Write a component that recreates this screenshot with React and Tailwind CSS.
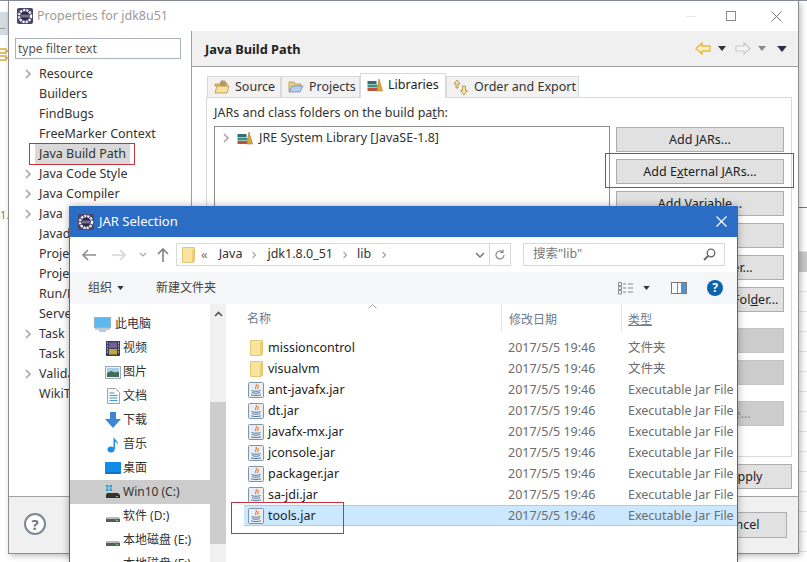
const FONT = { fontFamily: '"Noto Sans", "Noto Sans CJK SC", sans-serif' }

// rows from "Java" down are mostly under the JAR Selection dialog, so they get clipped
const TREE = [
  ['Resource', true],
  ['Builders'],
  ['FindBugs'],
  ['FreeMarker Context'],
  ['Java Build Path', false, true],
  ['Java Code Style', true],
  ['Java Compiler', true],
  ['Java', true, false, true],
  ['Javadoc Location', false, false, true],
  ['Project Facets', false, false, true],
  ['Project References', false, false, true],
  ['Run/Debug Settings', false, false, true],
  ['Server', false, false, true],
  ['Task', true, false, true],
  ['Task', false, false, true],
  ['Validation', true, false, true],
  ['WikiText', false, false, true],
]

const FILES = ['ant-javafx.jar', 'dt.jar', 'javafx-mx.jar', 'jconsole.jar', 'packager.jar', 'sa-jdi.jar']

const STRIP = [20, 20, 20, 20, 20, 20, 20, 20, 20, 20, 20, 20, 20, 20, 20, 20, 20, 20]

function EclipseIcon({ size = 16 }) {
  return (
    <svg width={size} height={size} viewBox="0 0 16 16" className="shrink-0">
      <rect width="16" height="16" rx="2" fill="#4a4468" />
      <circle cx="8" cy="8" r="6" fill="none" stroke="#f4f4f8" strokeWidth="2.4" strokeDasharray="2.2 1" />
      <circle cx="8" cy="8" r="4.3" fill="#2d2a45" />
      <path d="M4 7.2h8M4 8.8h8" stroke="#b9a7d8" strokeWidth="0.8" />
    </svg>
  )
}

function Chevron({ className = '' }) {
  return (
    <svg width="8" height="10" viewBox="0 0 8 10" className={className}>
      <path d="M2 1l4 4-4 4" fill="none" stroke="#a6a6a6" strokeWidth="1.6" />
    </svg>
  )
}

function Caret({ color = '#333', w = 8, h = 5 }) {
  return (
    <svg width={w} height={h} viewBox="0 0 8 5" className="shrink-0">
      <path d="M0 0h8L4 5z" fill={color} />
    </svg>
  )
}

function LibIcon() {
  return (
    <svg width="16" height="14" viewBox="0 0 16 14" className="shrink-0">
      <rect x="0.5" y="10" width="10" height="3" fill="#b5533c" />
      <rect x="0.5" y="6.5" width="10" height="3" fill="#3f8d7c" />
      <rect x="0.5" y="3" width="9" height="3" fill="#2f6f78" />
      <path d="M10 13L12 1l3.500 12z" fill="#e0a53b" stroke="#a9772a" strokeWidth="0.6" />
    </svg>
  )
}

function SourceIcon() {
  return (
    <svg width="16" height="14" viewBox="0 0 16 14" className="shrink-0">
      <path d="M1 4h4l1-1h7v3H1z" fill="#e8c572" stroke="#b08a3c" strokeWidth="0.7" />
      <path d="M3 6h12l-2 7H1z" fill="#f7dfa0" stroke="#b08a3c" strokeWidth="0.7" />
      <path d="M7 1h4v4H7zM9 1v4M7 3h4" fill="#f3d48c" stroke="#8a5a2c" strokeWidth="0.6" />
    </svg>
  )
}

function ProjectsIcon() {
  return (
    <svg width="16" height="14" viewBox="0 0 16 14" className="shrink-0">
      <path d="M1 12V2h5l1 2h6v2" fill="#eccd82" stroke="#a88a45" strokeWidth="0.7" />
      <path d="M1 12l3-6h11l-3 6z" fill="#b9cdeb" stroke="#6784b4" strokeWidth="0.7" />
    </svg>
  )
}

function OrderIcon() {
  return (
    <svg width="16" height="17" viewBox="0 0 16 17" className="shrink-0">
      <path d="M4 1l3 4H5v4H3V5H1zM11 16l3.500-4.500H12.500V7h-3v4.500H7.500z" fill="#f7e3a6" stroke="#a98a3a" strokeWidth="0.8" />
    </svg>
  )
}

function JarIcon() {
  return (
    <svg width="16" height="16" viewBox="0 0 16 16" className="shrink-0">
      <rect x="0.5" y="0.5" width="15" height="15" rx="1" fill="#e9eef4" stroke="#7f94aa" />
      <path d="M8 2c2 2-2 3 0 5M10 3c1 1.500-1 2.500 0 4" fill="none" stroke="#e07b2c" strokeWidth="1.100" />
      <path d="M3.500 8.500c2 1 7 1 9 0M4 10.500c2 1 6 1 8 0M3 12.800c2.500 1 7.500 1 10 0" fill="none" stroke="#56779e" strokeWidth="1" />
    </svg>
  )
}

function FolderIcon({ w = 16, h = 16 }) {
  return (
    <svg width={w} height={h} viewBox="0 0 13 16" className="shrink-0">
      <path d="M0.500 0.500h12v13.500l-1.500 1.500H0.500z" fill="#fae39a" stroke="#e2c775" />
      <path d="M11 15.500V3l1.500-1" fill="none" stroke="#d9b95f" />
    </svg>
  )
}

function DriveIcon({ win }) {
  return (
    <svg width="16" height="16" viewBox="0 0 16 16" className="shrink-0">
      {win && <path d="M1 1h2.500v2.500H1zM4.500 1H7v2.500H4.500zM1 4.500h2.500V7H1zM4.500 4.500H7V7H4.500z" fill="#29a3dc" />}
      <path d="M2 9h11l2 2v3H1v-3z" fill={win ? '#333' : '#5c5c5c'} />
      {!win && <path d="M2 9h11l1.500 2H1z" fill="#b9b9b9" />}
      <rect x="11" y="12" width="2" height="1" fill="#6fd06f" />
    </svg>
  )
}

function NavIcon({ kind }) {
  if (kind === 'pc') {
    return (
      <svg width="17" height="15" viewBox="0 0 17 15" className="shrink-0">
        <rect x="0.500" y="0.500" width="16" height="10" fill="#5cb8ee" stroke="#8fb6cc" />
        <path d="M1 12h15M5 14h7" stroke="#7f98a8" strokeWidth="1.200" />
      </svg>
    )
  }
  if (kind === 'video') {
    return (
      <svg width="14" height="15" viewBox="0 0 14 15" className="shrink-0">
        <rect width="14" height="15" fill="#33415a" />
        <rect x="3" y="1.500" width="8" height="5.500" fill="#7a5d9a" />
        <rect x="3" y="8" width="8" height="5.500" fill="#c9a43a" />
        <path d="M1 2h1M1 5h1M1 8h1M1 11h1M12 2h1M12 5h1M12 8h1M12 11h1" stroke="#e8edf2" />
      </svg>
    )
  }
  if (kind === 'pic') {
    return (
      <svg width="16" height="13" viewBox="0 0 16 13" className="shrink-0">
        <rect x="0.500" y="0.500" width="15" height="12" fill="#f0f3f5" stroke="#9aa9b5" />
        <rect x="2" y="2" width="12" height="5" fill="#a6cfe6" />
        <path d="M2 7l4-2 4 1.500 4-1V11H2z" fill="#3f6b58" />
      </svg>
    )
  }
  if (kind === 'doc') {
    return (
      <svg width="13" height="16" viewBox="0 0 13 16" className="shrink-0">
        <path d="M0.500 0.500h8l4 4v11h-12z" fill="#f7f9fb" stroke="#97a7b5" />
        <path d="M2.500 5h5M2.500 7.500h8M2.500 10h8M2.500 12.500h8" stroke="#4a94d0" />
      </svg>
    )
  }
  if (kind === 'down') {
    return (
      <svg width="16" height="16" viewBox="0 0 16 16" className="shrink-0">
        <path d="M5 0h6v7h5l-8 9-8-9h5z" fill="#3b87d6" />
      </svg>
    )
  }
  if (kind === 'music') {
    return (
      <svg width="12" height="17" viewBox="0 0 12 17" className="shrink-0">
        <ellipse cx="4" cy="13.500" rx="3.500" ry="3" fill="#1b8fe3" />
        <path d="M6.500 13V0.500c0.500 3 5 4 4.500 8-1-2-2.500-3-3-3V13z" fill="#1b8fe3" />
      </svg>
    )
  }
  return (
    <svg width="16" height="12" viewBox="0 0 16 12" className="shrink-0">
      <rect width="16" height="12" rx="0.500" fill="#118ae8" />
      <path d="M1 11h14" stroke="#0a5ea8" />
    </svg>
  )
}

function EclipseButton({ children, disabled }) {
  return (
    <div
      className={`h-[25px] pt-px flex items-center justify-center border whitespace-nowrap ${
        disabled ? 'bg-[#cccccc] border-[#c4c4c4] text-[#8a8a8a]' : 'bg-[#e1e1e1] border-[#adadad] text-[#222]'
      }`}
    >
      <span>{children}</span>
    </div>
  )
}

function Tab({ icon, label, active, width }) {
  return (
    <div
      className={`flex items-center gap-[5px] pl-[6px] border border-[#d9d9d9] whitespace-nowrap ${
        active ? 'h-[25px] bg-white border-b-0 text-[#222] relative pb-[2px]' : 'h-[22px] bg-[#f2f2f2] text-[#333]'
      }`}
      style={{ width }}
    >
      {icon}
      <span>{label}</span>
    </div>
  )
}

function Properties() {
  return (
    <div className="absolute left-[8px] top-[1px] w-[791px] h-[553px] bg-white border-l border-b border-r border-[#8d8d8d] flex flex-col shadow-[2px_2px_6px_rgba(0,0,0,0.25)] overflow-hidden">
      <div className="h-[30px] shrink-0 flex items-center pl-[8px] text-[#9b9b9b] text-[12.500px]">
        <EclipseIcon />
        <span className="ml-[4px]">Properties for jdk8u51</span>
        <div className="ml-auto flex items-center">
          <div className="w-[10px] h-px bg-[#e8e8e8] mr-[30px]" />
          <div className="w-[10px] h-[10px] border border-[#8a8a8a] mr-[35px]" />
          <svg width="11" height="11" viewBox="0 0 11 11" className="mr-[16px]">
            <path d="M0.500 0.500l10 10M10.500 0.500l-10 10" stroke="#777" />
          </svg>
        </div>
      </div>

      <div className="flex h-[465px] shrink-0">
        <div className="w-[183px] shrink-0 border-r border-[#a0a0a0] pt-[7px]">
          <div className="ml-[6px] w-[166px] h-[21px] border border-[#a9b2bd] flex items-center pl-[2px] pt-px text-[#555] text-[12px]">
            type filter text
          </div>
          <div className="mt-[5px]">
            {TREE.map(([label, arrow, selected, clipped], i) => (
              <div key={i} className="h-[20px] flex items-center relative pl-[30px] text-[#333]">
                {arrow && <Chevron className="absolute left-[15px] top-[5px]" />}
                <span
                  className={`whitespace-nowrap ${selected ? 'bg-[#d9d9d9] h-[20px] leading-[20px] px-[4px] -ml-[4px]' : ''} ${
                    clipped ? 'w-[30px] overflow-hidden' : ''
                  }`}
                >
                  {label}
                </span>
              </div>
            ))}
          </div>
        </div>

        <div className="flex-1 flex flex-col min-w-0">
          <div className="h-[36px] shrink-0 bg-[#f0f0f0] border-b border-[#a0a0a0] flex items-center pl-[13px] pr-[11px]">
            <span className="font-bold text-[12.800px] text-[#222] pt-[3px]">Java Build Path</span>
            <div className="ml-auto flex items-center">
              <svg width="16" height="13" viewBox="0 0 16 13">
                <path d="M7 1L1 6.500 7 12V9h8V4H7z" fill="#fdf0c4" stroke="#e7b63f" strokeWidth="1.300" />
              </svg>
              <div className="ml-[7px]"><Caret color="#333" /></div>
              <svg width="16" height="13" viewBox="0 0 16 13" className="ml-[9px]">
                <path d="M9 1l6 5.500L9 12V9H1V4h8z" fill="#f4f4f4" stroke="#c9c9c9" strokeWidth="1.200" />
              </svg>
              <div className="ml-[7px]"><Caret color="#8a8a8a" /></div>
              <div className="ml-[11px]"><Caret color="#2f2a45" w={10} h={6} /></div>
            </div>
          </div>

          <div className="pl-[14px] pr-[6px] pt-[6px] flex-1 flex flex-col">
            <div className="flex items-end h-[25px] pl-[1px] text-[12.500px] relative z-10 -mb-px">
              <Tab icon={<SourceIcon />} label="Source" width={74} />
              <Tab icon={<ProjectsIcon />} label="Projects" width={79} />
              <Tab icon={<LibIcon />} label="Libraries" active width={86} />
              <Tab icon={<OrderIcon />} label="Order and Export" width={133} />
            </div>
            <div className="h-[360px] shrink-0 border border-[#d9d9d9] pl-[7px] pr-[7px] text-[12.500px]">
              <div className="h-[28px] flex items-center pt-[2px] text-[#333]">
                <span>JARs and class folders on the build pa<u>t</u>h:</span>
              </div>
              <div className="flex gap-[6px]">
                <div className="w-[396px] h-[322px] border border-[#8f8f8f] pl-[7px] pt-[3px]">
                  <div className="flex items-center h-[16px] text-[#333]">
                    <Chevron />
                    <span className="ml-[7px]"><LibIcon /></span>
                    <span className="ml-[6px] whitespace-nowrap">JRE System Library [JavaSE-1.8]</span>
                  </div>
                </div>
                <div className="w-[168px] pt-px flex flex-col gap-[7px]">
                  <EclipseButton>Add <u>J</u>ARs...</EclipseButton>
                  <EclipseButton>Add E<u>x</u>ternal JARs...</EclipseButton>
                  <EclipseButton>Add <u>V</u>ariable...</EclipseButton>
                  <EclipseButton>Add Li<u>b</u>rary...</EclipseButton>
                  <EclipseButton>Add <u>C</u>lass Folder...</EclipseButton>
                  <EclipseButton>Add External Class Fol<u>d</u>er...</EclipseButton>
                  <div className="mt-[9px]"><EclipseButton disabled>Edit...</EclipseButton></div>
                  <EclipseButton disabled>Remove</EclipseButton>
                  <div className="mt-[9px]"><EclipseButton disabled>Migrate JAR File...</EclipseButton></div>
                </div>
              </div>
            </div>
            <div className="mt-[7px] self-end w-[92px] h-[25px] pt-px border border-[#adadad] bg-[#e1e1e1] flex items-center justify-center text-[12.500px] text-[#222]">
              Apply
            </div>
          </div>
        </div>
      </div>

      <div className="flex-1 border-t border-[#a0a0a0] bg-[#f0f0f0] flex items-center pl-[15px] pr-[11px]">
        <div className="w-[22px] h-[22px] rounded-full border-2 border-[#7d8793] bg-white flex items-center justify-center font-bold text-[15px] text-[#6e7885] -mt-[2px]">
          ?
        </div>
        <div className="ml-auto w-[94px] h-[26px] pt-px border border-[#adadad] bg-[#e1e1e1] flex items-center justify-center text-[12.500px] text-[#222]">
          Cancel
        </div>
      </div>
    </div>
  )
}

function NavRow({ icon, label, indent = 'pl-[33px]', gap = 'ml-0', selected }) {
  return (
    <div className={`h-[24px] flex items-center ${indent} ${selected ? 'bg-[#cccccc]' : ''}`}>
      <div className="w-[20px] flex justify-center shrink-0">{icon}</div>
      <span className={`${gap} whitespace-nowrap`}>{label}</span>
    </div>
  )
}

function FileRow({ icon, name, type, selected }) {
  return (
    <div className={`h-[21px] grid grid-cols-[257px_120px_1fr] items-center whitespace-nowrap box-border ${selected ? 'bg-[#cce8ff] border-y border-[#99d1ff]' : ''}`}>
      <div className="flex items-center pl-[4px] text-[#222]">
        <div className="w-[16px] flex justify-center">{icon}</div>
        <span className="ml-[4px] pt-px">{name}</span>
      </div>
      <div className="pl-[7px] pt-px text-[#6d6d6d]">2017/5/5 19:46</div>
      <div className="pl-[7px] pt-px text-[#6d6d6d]">{type}</div>
    </div>
  )
}

function JarDialog() {
  return (
    <div className="absolute left-[69px] top-[206px] w-[669px] h-[356px] bg-white border-x border-[#2b6cc4] flex flex-col overflow-hidden shadow-[0_0_8px_rgba(0,0,0,0.3)] text-[12.500px]">
      <div className="h-[31px] shrink-0 bg-[#2b6cc4] flex items-center pl-[8px] text-white text-[13px]">
        <EclipseIcon />
        <span className="ml-[5px]">JAR Selection</span>
        <svg width="11" height="11" viewBox="0 0 11 11" className="ml-auto mr-[10px]">
          <path d="M0.500 0.500l10 10M10.500 0.500l-10 10" stroke="#fff" strokeWidth="1.200" />
        </svg>
      </div>

      <div className="h-[35px] shrink-0 flex items-center">
        <svg width="14" height="12" viewBox="0 0 14 12" className="ml-[12px]">
          <path d="M6 1L1 6l5 5M1 6h13" fill="none" stroke="#8f8f8f" strokeWidth="1.600" />
        </svg>
        <svg width="14" height="12" viewBox="0 0 14 12" className="ml-[16px]">
          <path d="M8 1l5 5-5 5M13 6H0" fill="none" stroke="#d6d6d6" strokeWidth="1.600" />
        </svg>
        <svg width="8" height="5" viewBox="0 0 8 5" className="ml-[13px]">
          <path d="M1 1l3 3 3-3" fill="none" stroke="#a8a8a8" strokeWidth="1.200" />
        </svg>
        <svg width="12" height="14" viewBox="0 0 12 14" className="ml-[10px]">
          <path d="M1 6l5-5 5 5M6 1v13" fill="none" stroke="#808080" strokeWidth="1.600" />
        </svg>
        <div className="ml-[7px] w-[335px] h-[23px] border border-[#d9d9d9] flex items-center pl-[5px] text-[#333] shrink-0">
          <FolderIcon w={13} h={16} />
          <span className="ml-[6px] text-[#777] text-[13px]">«</span>
          <span className="ml-[11px]">Java</span>
          <Chevron className="ml-[8px] scale-75" />
          <span className="ml-[9px]">jdk1.8.0_51</span>
          <Chevron className="ml-[8px] scale-75" />
          <span className="ml-[8px]">lib</span>
          <Chevron className="ml-[9px] scale-75" />
          <svg width="10" height="6" viewBox="0 0 10 6" className="ml-auto mr-[4px]">
            <path d="M1 1l4 4 4-4" fill="none" stroke="#707070" strokeWidth="1.400" />
          </svg>
          <div className="w-px h-full bg-[#d9d9d9]" />
          <svg width="12" height="12" viewBox="0 0 12 12" className="mx-[4px]">
            <path d="M10 6a4 4 0 1 1-1.500-3.200M9 0.500v3H6" fill="none" stroke="#8a8a8a" strokeWidth="1.200" />
          </svg>
        </div>
        <div className="ml-[12px] w-[202px] h-[23px] border border-[#d9d9d9] flex items-center pl-[9px] pr-[8px] text-[#777] shrink-0">
          <span>搜索"lib"</span>
          <svg width="13" height="13" viewBox="0 0 13 13" className="ml-auto">
            <circle cx="8" cy="5" r="3.800" fill="none" stroke="#666" strokeWidth="1.300" />
            <path d="M5 8l-4 4" stroke="#666" strokeWidth="1.800" />
          </svg>
        </div>
      </div>

      <div className="h-[32px] shrink-0 bg-[#f5f6f7] flex items-center pl-[18px] text-[#444] text-[12px]">
        <span>组织</span>
        <div className="ml-[5px]"><Caret color="#333" w={7} h={4} /></div>
        <span className="ml-[32px]">新建文件夹</span>
        <div className="ml-auto flex items-center pr-[14px]">
          <svg width="16" height="13" viewBox="0 0 16 13">
            <path d="M0.500 0.500h3v3h-3zM0.500 4.500h3v3h-3zM0.500 8.500h3v3.500h-3z" fill="none" stroke="#8a8a8a" />
            <path d="M5 2h3M5 6h3M5 10h3M10 2h5M10 6h5M10 10h5" stroke="#8a8a8a" />
          </svg>
          <div className="ml-[9px]"><Caret color="#333" w={7} h={4} /></div>
          <svg width="16" height="12" viewBox="0 0 16 12" className="ml-[21px]">
            <rect x="0.500" y="0.500" width="15" height="11" fill="#fff" stroke="#777" />
            <rect x="10" y="1" width="5" height="10" fill="#4d94d4" />
            <path d="M6.500 1v10" stroke="#888" />
          </svg>
          <div className="ml-[20px] w-[16px] h-[16px] rounded-full bg-[#0f62ae] flex items-center justify-center text-white font-bold text-[12px] leading-none">?</div>
        </div>
      </div>

      <div className="flex flex-1 min-h-0">
        <div className="w-[140px] shrink-0 pt-[8px] text-[#333] text-[12px]">
          <NavRow icon={<NavIcon kind="pc" />} label="此电脑" indent="pl-[22px]" gap="ml-[3px]" />
          <NavRow icon={<NavIcon kind="video" />} label="视频" />
          <NavRow icon={<NavIcon kind="pic" />} label="图片" />
          <NavRow icon={<NavIcon kind="doc" />} label="文档" />
          <NavRow icon={<NavIcon kind="down" />} label="下载" />
          <NavRow icon={<NavIcon kind="music" />} label="音乐" />
          <NavRow icon={<NavIcon kind="desk" />} label="桌面" />
          <NavRow icon={<DriveIcon win />} label="Win10 (C:)" selected />
          <NavRow icon={<DriveIcon />} label="软件 (D:)" />
          <NavRow icon={<DriveIcon />} label="本地磁盘 (E:)" />
          <NavRow icon={<DriveIcon />} label="本地磁盘 (F:)" />
        </div>

        <div className="w-[16px] shrink-0 bg-[#f0f0f0] flex flex-col items-center">
          <div className="h-[98px] w-full flex justify-center pt-[7px]">
            <svg width="9" height="6" viewBox="0 0 9 6">
              <path d="M1 5l3.500-3.500L8 5" fill="none" stroke="#555" strokeWidth="1.600" />
            </svg>
          </div>
          <div className="w-full h-[142px] bg-[#cdcdcd]" />
        </div>

        <div className="flex-1 min-w-0 pl-[18px]">
          <div className="h-[33px] grid grid-cols-[257px_120px_1fr] text-[#6d7a8a] text-[12px] relative">
            <div className="flex items-center pl-[3px] pb-[3px]">名称</div>
            <div className="flex items-center pl-[7px] border-l border-[#e5e5e5] mb-[6px] pt-[4px]">修改日期</div>
            <div className="flex items-center pl-[6px] border-l border-[#e5e5e5] mb-[6px] pt-[4px]"><u>类型</u></div>
            <svg width="9" height="5" viewBox="0 0 9 5" className="absolute left-[124px] top-0">
              <path d="M0.500 4.500L4.500 0.500l4 4" fill="none" stroke="#9aa5b0" />
            </svg>
          </div>
          <FileRow icon={<FolderIcon w={13} h={16} />} name="missioncontrol" type="文件夹" />
          <FileRow icon={<FolderIcon w={13} h={16} />} name="visualvm" type="文件夹" />
          {FILES.map((f) => (
            <FileRow key={f} icon={<JarIcon />} name={f} type="Executable Jar File" />
          ))}
          <FileRow icon={<JarIcon />} name="tools.jar" type="Executable Jar File" selected />
        </div>
      </div>
    </div>
  )
}

export default function App() {
  return (
    <div className="relative w-[807px] h-[562px] overflow-hidden bg-white text-[12.500px]" style={FONT}>
      {/* what shows of the workbench behind the windows */}
      <div className="absolute left-0 top-0 w-full h-px bg-[#8a8f99]" />
      <div className="absolute left-0 top-[12px] w-[8px] h-[23px] bg-[#d5dbe3] text-[#333] text-[9px] leading-[28px]">..</div>
      <svg width="8" height="16" viewBox="0 0 8 16" className="absolute left-0 top-[47px]">
        <path d="M0 2h6v4H0M0 9h6v4H0M6 4h2M6 11h2" fill="none" stroke="#d6a93e" strokeWidth="1.400" />
      </svg>
      <div className="absolute left-0 top-[207px] text-[11px] text-[#8b8060]">1.</div>
      <div className="absolute left-[799px] top-[207px] w-[8px]">
        <div className="h-px bg-[#777]" />
        <div className="h-[20px] border-b border-[#e8e8e8] mt-[24px]" />
        <div className="h-[20px] bg-[#c9c9c9]" />
        {STRIP.map((h, i) => (
          <div key={i} className="border-b border-[#e4e4e4]" style={{ height: h }} />
        ))}
      </div>

      <Properties />
      <JarDialog />

      {/* red annotation boxes */}
      <div className="absolute left-[29px] top-[143px] w-[106px] h-[22px] border border-[#c8323f]" />
      <div className="absolute left-[605px] top-[153px] w-[189px] h-[35px] border border-[#c8323f]" />
      <div className="absolute left-[231px] top-[502px] w-[113px] h-[32px] border border-[#c8323f]" />
    </div>
  )
}
